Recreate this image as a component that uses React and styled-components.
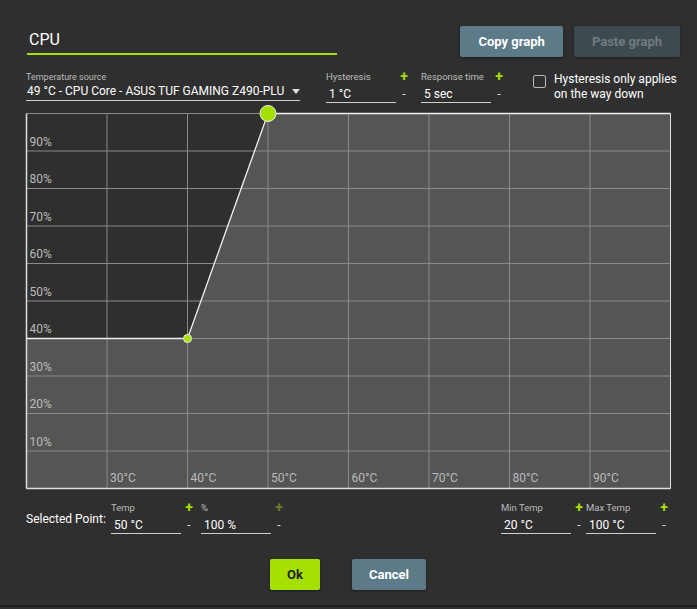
import React from "react";
import styled, { createGlobalStyle } from "styled-components";

const G = createGlobalStyle`
  html,body{margin:0;padding:0;background:#2f2f2f;}
  body{font-family:Roboto,"Noto Sans",sans-serif;color:#fff;}
`;
const Page = styled.div`
  width:697px;height:607px;background:#2f2f2f;border-bottom:2px solid #1f1f1f;
  position:relative;box-sizing:border-box;
`;
const Header = styled.div`
  display:flex;align-items:flex-start;padding:26px 17px 0 27px;height:31px;
`;
const Title = styled.div`
  width:308px;height:26px;margin-top:1px;border-bottom:2px solid #a6e000;
  font-size:16px;padding-left:2px;line-height:26px;
`;
const Spacer = styled.div`flex:1;`;
const Btn = styled.button`
  height:31px;padding:0 ${p=>p.$px||18}px;border:none;border-radius:2px;
  font-family:Roboto,sans-serif;font-weight:700;font-size:13px;
  background:${p=>p.$bg};color:${p=>p.$fg};margin-left:${p=>p.$ml||0}px;
  box-shadow:0 1px 3px rgba(0,0,0,.4);
`;
const Row2 = styled.div`
  display:flex;align-items:flex-start;padding:13px 0 0 26px;height:43px;box-sizing:border-box;
`;
const Source = styled.div`width:274px;margin-top:2px;`;
const Tiny = styled.div`font-size:9px;color:#bbb;height:11px;line-height:11px;`;
const SourceVal = styled.div`
  display:flex;justify-content:space-between;align-items:center;
  font-size:12px;height:16px;border-bottom:1px solid #cfcfcf;padding-left:1px;padding-bottom:1px;
`;
const Tri = styled.span`
  width:0;height:0;border-left:4px solid transparent;border-right:4px solid transparent;
  border-top:5px solid #ddd;
`;
const FieldBox = styled.div`
  display:grid;grid-template-columns:70px 16px;margin-left:${p=>p.$ml}px;
`;
const FLabel = styled.div`font-size:9.5px;color:#bbb;height:14px;line-height:14px;white-space:nowrap;`;
const Plus = styled.div`
  font-size:14px;font-weight:700;color:${p=>p.$dim?"#6f7d22":"#a6e000"};
  height:14px;line-height:12px;text-align:center;
`;
const FVal = styled.div`
  font-size:12px;height:18px;line-height:20px;padding-left:3px;border-bottom:1px solid #cfcfcf;
`;
const Minus = styled.div`font-size:12px;text-align:center;line-height:20px;color:#ddd;`;
const Check = styled.div`
  display:flex;margin-left:26px;gap:8px;margin-top:2px;font-size:12px;line-height:15px;
`;
const Box = styled.div`
  width:11px;height:11px;border:1.5px solid #bbb;border-radius:2px;margin-top:3px;
`;
const ChartWrap = styled.div`margin:13px 0 0 26px;width:645px;height:376px;`;
const Bottom = styled.div`
  display:flex;align-items:flex-start;padding:12px 0 0 26px;height:60px;box-sizing:border-box;
`;
const SelLabel = styled.div`font-size:12px;margin-top:11px;width:85px;white-space:nowrap;`;
const Actions = styled.div`display:flex;justify-content:center;gap:32px;margin-top:10px;padding-right:1px;`;

function Field({ label, value, ml, dim }) {
  return (
    <FieldBox $ml={ml}>
      <FLabel>{label}</FLabel><Plus $dim={dim}>+</Plus>
      <FVal>{value}</FVal><Minus>-</Minus>
    </FieldBox>
  );
}

function Chart() {
  const W = 644, H = 375, cw = W / 8, rh = H / 10;
  const px = t => (t - 20) / 80 * W;
  const py = v => H - v / 100 * H;
  const p1 = [px(40), py(40)], p2 = [px(50), py(100)];
  return (
    <svg width="645" height="376" viewBox="-0.5 -0.5 645 376" style={{ display: "block", overflow: "visible" }}>
      <rect x="0" y="0" width={W} height={H} fill="#2f2f2f" />
      <polygon points={`0,${p1[1]} ${p1[0]},${p1[1]} ${p2[0]},${p2[1]} ${W},0 ${W},${H} 0,${H}`} fill="#555" />
      {Array.from({ length: 9 }, (_, i) => <line key={"v" + i} x1={i * cw} x2={i * cw} y1="0" y2={H} stroke="#8a8a8a" strokeWidth="1" />)}
      {Array.from({ length: 11 }, (_, i) => <line key={"h" + i} y1={i * rh} y2={i * rh} x1="0" x2={W} stroke="#8a8a8a" strokeWidth="1" />)}
      <line x1="0" x2="0" y1="0" y2={H} stroke="#ddd" strokeWidth="1.5" />
      <line x1="0" x2={W} y1={H} y2={H} stroke="#ddd" strokeWidth="1.5" />
      <line x1={W} x2={W} y1="0" y2={H} stroke="#ddd" strokeWidth="1" />
      {[90, 80, 70, 60, 50, 40, 30, 20, 10].map((v, i) => (
        <text key={v} x="3" y={(i + 1) * rh - 5.5} fill="#bbb" fontSize="12" fontFamily="Roboto">{v}%</text>
      ))}
      {[30, 40, 50, 60, 70, 80, 90].map((t, i) => (
        <text key={t} x={(i + 1) * cw + 3} y={H - 7} fill="#bbb" fontSize="12" fontFamily="Roboto">{t}°C</text>
      ))}
      <polyline points={`0,${p1[1]} ${p1[0]},${p1[1]} ${p2[0]},${p2[1]} ${W},0`} fill="none" stroke="#eee" strokeWidth="1.3" />
      <circle cx={p1[0]} cy={p1[1]} r="4" fill="#a6e000" stroke="#eee" strokeWidth="1" />
      <circle cx={p2[0]} cy={p2[1]} r="8" fill="#a6e000" stroke="#eee" strokeWidth="1" />
    </svg>
  );
}

export default function App() {
  return (
    <Page>
      <G />
      <Header>
        <Title>CPU</Title>
        <Spacer />
        <Btn $bg="#5c7a88" $fg="#fff">Copy graph</Btn>
        <Btn $bg="#3d4a50" $fg="#707b80" $ml={11}>Paste graph</Btn>
      </Header>
      <Row2>
        <Source>
          <Tiny>Temperature source</Tiny>
          <SourceVal>49 °C - CPU Core - ASUS TUF GAMING Z490-PLU<Tri /></SourceVal>
        </Source>
        <Field label="Hysteresis" value="1 °C" ml={26} />
        <Field label="Response time" value="5 sec" ml={9} />
        <Check><Box /><div>Hysteresis only applies<br />on the way down</div></Check>
      </Row2>
      <ChartWrap><Chart /></ChartWrap>
      <Bottom>
        <SelLabel>Selected Point:</SelLabel>
        <Field label="Temp" value="50 °C" ml={0} />
        <Field label="%" value="100 %" ml={4} dim />
        <Spacer />
        <Field label="Min Temp" value="20 °C" ml={0} />
        <Field label="Max Temp" value="100 °C" ml={-1} />
        <div style={{ width: 25 }} />
      </Bottom>
      <Actions>
        <Btn $bg="#a6e000" $fg="#222" $px={17}>Ok</Btn>
        <Btn $bg="#5c7a88" $fg="#fff" $px={17}>Cancel</Btn>
      </Actions>
    </Page>
  );
}
